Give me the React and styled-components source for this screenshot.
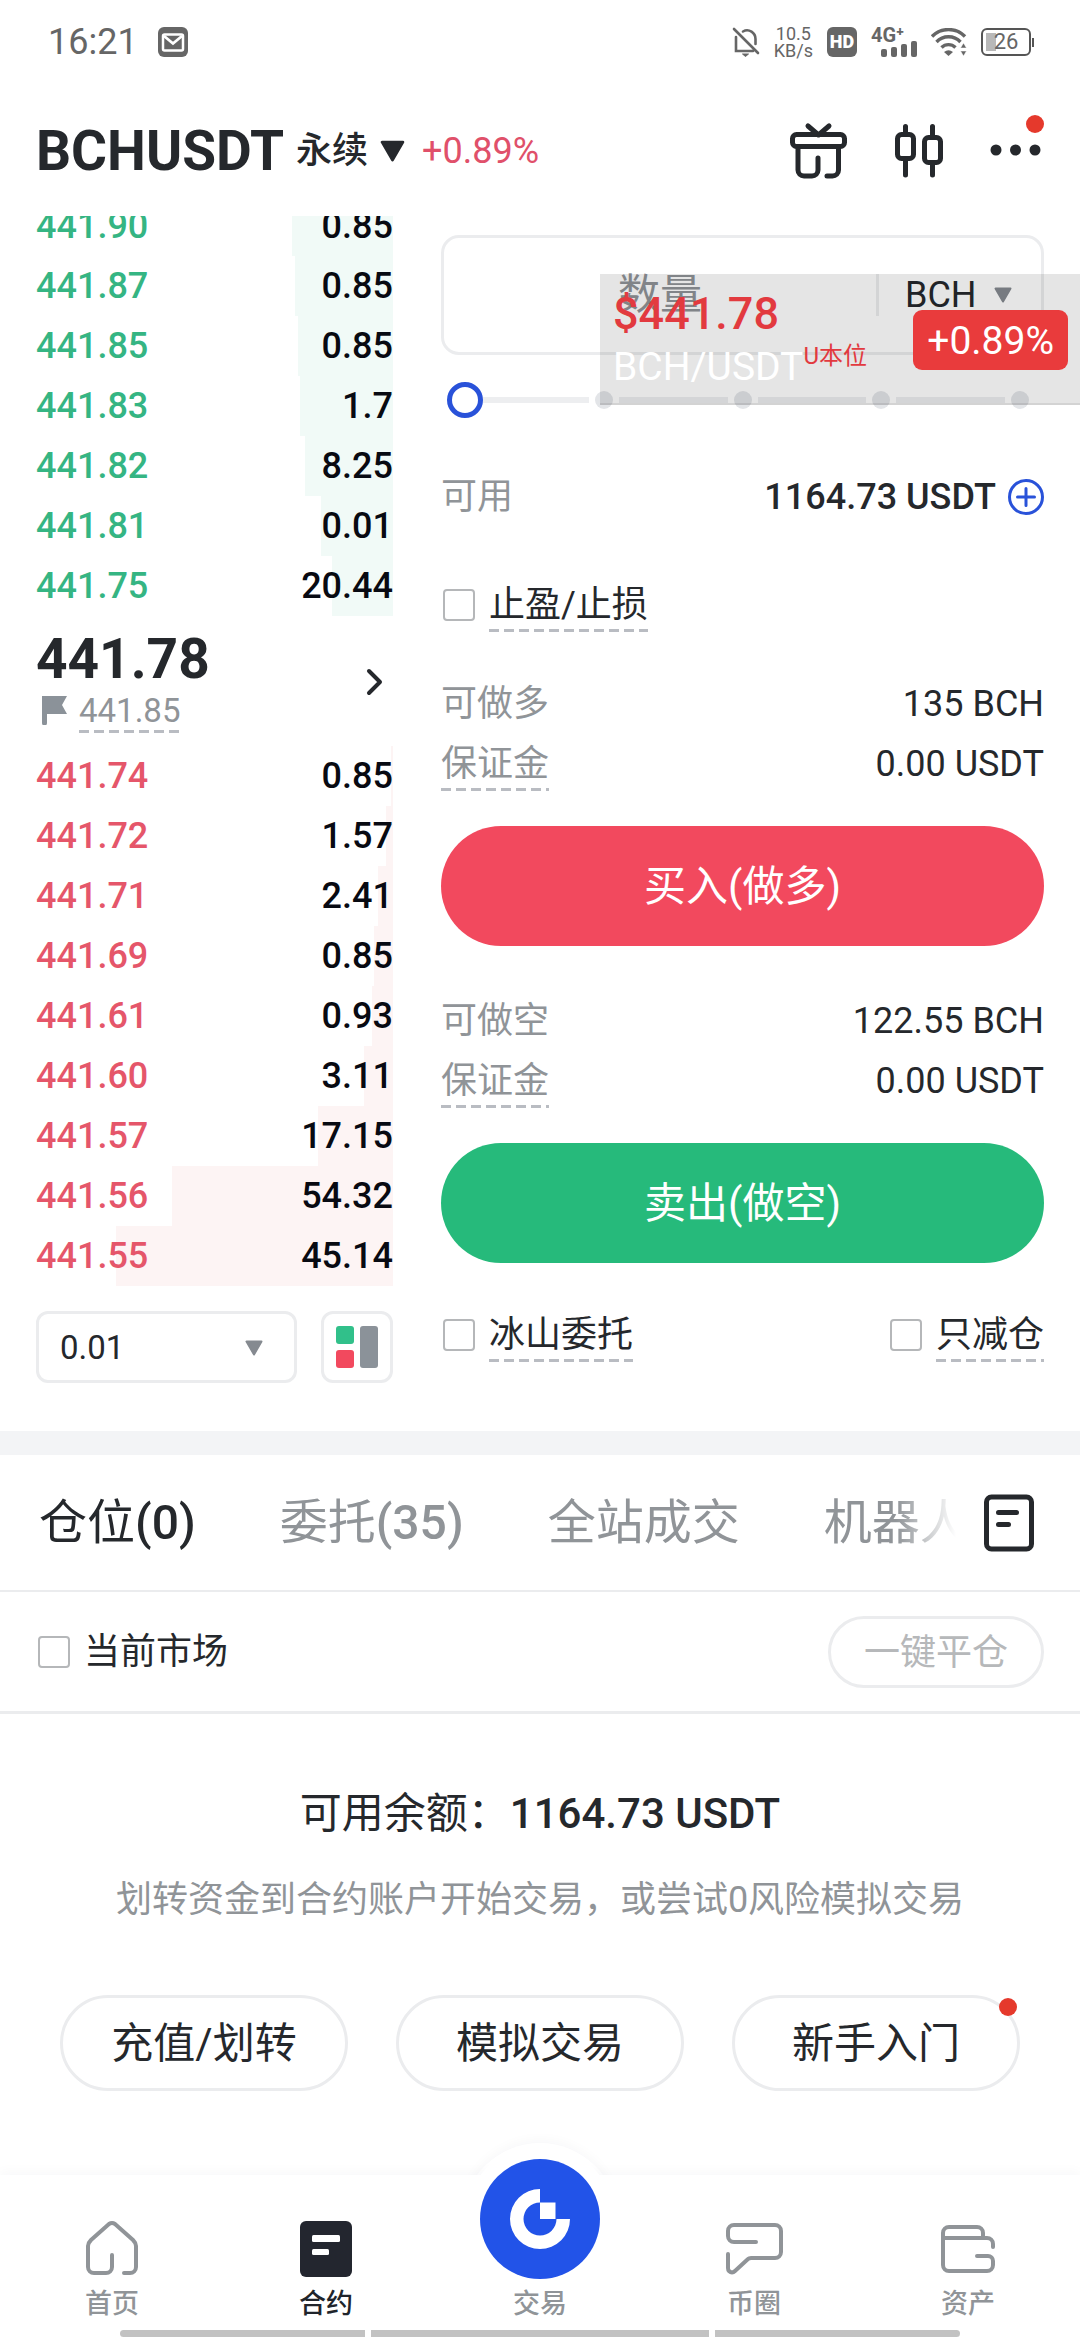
import React from "react";
import styled, { createGlobalStyle, css } from "styled-components";

const c = {
  ink: "#25282c",
  grey: "#909498",
  line: "#ebecee",
  red: "#f2495e",
  green: "#26ba7b",
  blue: "#2952d9",
  alert: "#e5392c",
};

const Global = createGlobalStyle`
  * { box-sizing: border-box; }
  body {
    margin: 0;
    background: #fff;
    color: ${c.ink};
    font: 400 36px/54px Roboto, "Noto Sans CJK SC", sans-serif;
  }
  button, input, select { font: inherit; color: inherit; }
  button { padding: 0; border: 0; background: none; }
  a { color: inherit; text-decoration: none; }
  svg { display: block; flex: none; }
`;

const Page = styled.div`
  display: flex;
  flex-direction: column;
  min-height: 100vh;
  position: relative;
  isolation: isolate;
  overflow: hidden;
  background: #fff;
`;

/* status bar */
const StatusBar = styled.div`
  display: flex;
  align-items: center;
  height: 84px;
  padding: 0 46px 0 48px;
  color: #666;
`;
const Clock = styled.span`
  margin-right: 20px;
`;
const StatusIcons = styled.div`
  display: flex;
  align-items: center;
  gap: 14px;
  margin-left: auto;
`;
const NetSpeed = styled.div`
  display: flex;
  flex-direction: column;
  align-items: center;
  font-size: 18px;
  line-height: 17px;
`;
const HdBadge = styled.span`
  width: 30px;
  border-radius: 6px;
  background: #666;
  color: #fff;
  font-size: 18px;
  font-weight: 900;
  line-height: 30px;
  text-align: center;
`;
const Signal = styled.div`
  display: flex;
  flex-direction: column;
  width: 46px;
  font-size: 20px;
  font-weight: 700;
  line-height: 17px;
  svg { align-self: flex-end; margin-top: -3px; }
`;
const Battery = styled.span`
  width: 50px;
  border: 2px solid #555;
  border-radius: 6px;
  background: linear-gradient(#b8b8b8, #b8b8b8) 3px center / 10px 18px no-repeat;
  font-size: 22px;
  line-height: 24px;
  text-align: center;
`;
const BatteryBox = styled.span`
  display: flex;
  align-items: center;
  gap: 1px;
  &::after { content: ""; width: 2px; height: 9px; background: #555; }
`;

/* header */
const Header = styled.header`
  display: flex;
  align-items: center;
  height: 132px;
  padding: 2px 36px 0;
`;
const PairButton = styled.button`
  display: flex;
  align-items: center;
  gap: 12px;
  font-weight: 500;
`;
const Pair = styled.span`
  font-size: 55px;
  font-weight: 700;
`;
const Change = styled.span`
  margin-left: 17px;
  color: #e0506a;
`;
const HeaderTools = styled.div`
  display: flex;
  align-items: center;
  gap: 44px;
  margin-left: auto;
`;
const IconButton = styled.button`
  position: relative;
  display: grid;
  place-items: center;
`;
const Dot = styled.i`
  position: absolute;
  top: ${(p) => p.$top}px;
  right: 0;
  width: 18px;
  height: 18px;
  border-radius: 50%;
  background: ${c.alert};
`;

/* trading area */
const Trade = styled.main`
  display: grid;
  grid-template-columns: 357fr 603fr;
  column-gap: 48px;
  padding: 0 36px 48px;
`;
const Column = styled.section`
  display: flex;
  flex-direction: column;
  min-width: 0;
`;
const BookClip = styled.div`
  display: flex;
  flex-direction: column;
  justify-content: flex-end;
  height: ${(p) => p.$height}px;
  overflow: hidden;
`;
const Book = styled.table`
  display: block;
  border-spacing: 0;
  font-weight: 500;
  tbody { display: block; }
`;
const BookRow = styled.tr`
  display: flex;
  justify-content: space-between;
  height: 60px;
  line-height: 60px;
  background: linear-gradient(${(p) => (p.$ask ? "#f1faf7, #f1faf7" : "#fdf4f4, #fdf4f4")}) right / 0 100% no-repeat;
`;
const Price = styled.td`
  padding: 0;
  color: ${(p) => (p.$ask ? "#35b583" : "#e5566a")};
`;
const Qty = styled.td`
  padding: 0;
  color: #080a12;
`;
const LastPrice = styled.button`
  display: flex;
  align-items: center;
  justify-content: space-between;
  height: 130px;
  padding: 2px 10px 0 0;
  text-align: left;
`;
const BigPrice = styled.div`
  font-size: 55px;
  font-weight: 700;
  line-height: 57px;
`;
const MarkPrice = styled.div`
  display: flex;
  align-items: center;
  gap: 12px;
  padding-left: 6px;
  color: ${c.grey};
  font-size: 33px;
  line-height: 45px;
`;
const dashed = css`
  background: repeating-linear-gradient(90deg, #b9bcc2 0 10px, transparent 10px 15px) left bottom / 100% 3px no-repeat;
`;
const Dashed = styled.span`
  ${dashed}
`;
const BookTools = styled.div`
  display: flex;
  gap: 24px;
  margin-top: 25px;
`;
const Depth = styled.label`
  display: flex;
  flex: 1;
  align-items: center;
  height: 72px;
  padding: 2px 31px 0 21px;
  border: 3px solid ${c.line};
  border-radius: 12px;
`;
const BareSelect = styled.select`
  flex: 1;
  min-width: 0;
  padding: 0;
  border: 0;
  outline: 0;
  appearance: none;
  background: none;
  font-size: ${(p) => p.$size}px;
`;
const LayoutButton = styled.button`
  display: grid;
  place-items: center;
  width: 72px;
  height: 72px;
  border: 3px solid ${c.line};
  border-radius: 12px;
`;

const AmountBox = styled.div`
  display: flex;
  align-items: center;
  height: 120px;
  margin-top: 19px;
  border: 3px solid ${c.line};
  border-radius: 18px;
`;
const AmountInput = styled.input`
  flex: 1;
  min-width: 0;
  padding: 0;
  border: 0;
  outline: 0;
  background: none;
  font-size: 42px;
  text-align: center;
  &::placeholder { color: ${c.grey}; opacity: 1; }
`;
const Unit = styled.label`
  display: flex;
  align-items: center;
  width: 165px;
  height: 42px;
  padding: 0 29px 0 26px;
  border-left: 3px solid ${c.line};
`;
const Slider = styled.div`
  display: grid;
  align-items: center;
  margin: 27px 6px 48px;
  > * { grid-area: 1 / 1; }
`;
const Track = styled.div`
  display: grid;
  grid-template-columns: repeat(4, 1fr);
  padding: 0 9px 0 27px;
`;
const Segment = styled.div`
  display: flex;
  align-items: center;
  gap: 6px;
  padding-left: 6px;
  &::before { content: ""; flex: 1; height: 6px; background: #edeef0; }
  &::after { content: ""; width: 18px; height: 18px; border-radius: 50%; background: #e3e5e8; }
`;
const Range = styled.input`
  width: 100%;
  height: 36px;
  margin: 0;
  appearance: none;
  background: none;
  &::-webkit-slider-thumb {
    appearance: none;
    width: 36px;
    height: 36px;
    border: 5px solid ${c.blue};
    border-radius: 50%;
    background: #fff;
  }
`;
const InfoRow = styled.div`
  display: flex;
  align-items: center;
  justify-content: space-between;
  height: 60px;
  padding-top: 1px;
`;
const Label = styled.span`
  color: ${c.grey};
  ${(p) => p.$help && dashed}
`;
const Value = styled.span`
  display: flex;
  align-items: center;
  gap: 12px;
  margin-left: auto;
  font-weight: ${(p) => (p.$strong ? 500 : 400)};
`;
const OptionRow = styled(InfoRow)`
  margin-top: ${(p) => p.$top}px;
`;
const Check = styled.label`
  display: flex;
  align-items: center;
  gap: 14px;
  padding-left: 2px;
`;
const CheckBox = styled.input`
  width: 32px;
  height: 32px;
  margin: 0;
  appearance: none;
  border: 2px solid #b5b7b9;
  border-radius: 4px;
  background: #fff;
`;
const OrderBlock = styled.div`
  margin-top: ${(p) => p.$top}px;
`;
const OrderButton = styled.button`
  width: 100%;
  height: 120px;
  margin-top: 33px;
  padding-top: 2px;
  border-radius: 60px;
  background: ${(p) => p.$color};
  color: #fff;
  font-size: 42px;
`;

/* floating price window */
const Floating = styled.aside`
  position: absolute;
  top: 274px;
  right: 0;
  display: flex;
  justify-content: space-between;
  width: 480px;
  height: 131px;
  padding: 14px 12px 0 13px;
  border-bottom: 2px solid rgba(0, 0, 0, 0.08);
  background: rgba(0, 0, 0, 0.1);
`;
const FloatPrice = styled.div`
  color: #e23a3f;
  font-size: 45px;
  font-weight: 500;
  line-height: 52px;
`;
const FloatPair = styled.div`
  display: flex;
  color: #fff;
  font-size: 39px;
`;
const FloatTag = styled.span`
  color: #e23a3f;
  font-size: 24px;
  line-height: 32px;
`;
const FloatBadge = styled.span`
  align-self: flex-start;
  margin-top: 22px;
  padding: 2px 14px 0;
  border-radius: 9px;
  background: #e93b3c;
  color: #fff;
  font-size: 39px;
  line-height: 58px;
`;

/* positions */
const Positions = styled.section`
  border-top: 24px solid #f3f4f6;
`;
const TabBar = styled.div`
  display: flex;
  align-items: center;
  height: 137px;
  padding: 0 46px 0 39px;
  border-bottom: 2px solid ${c.line};
`;
const Tabs = styled.div`
  display: flex;
  flex: 1;
  gap: 84px;
  min-width: 0;
  margin-right: 28px;
  overflow: hidden;
  white-space: nowrap;
  mask-image: linear-gradient(90deg, #000 calc(100% - 60px), transparent);
`;
const Tab = styled.button`
  flex: none;
  color: ${(p) => (p.$active ? c.ink : c.grey)};
  font-size: 48px;
  line-height: 72px;
  b { font-weight: 500; }
`;
const MarketRow = styled.div`
  display: flex;
  align-items: center;
  justify-content: space-between;
  height: 122px;
  padding: 0 36px;
  border-bottom: 3px solid ${c.line};
`;
const CloseAll = styled.button`
  height: 72px;
  padding: 2px 33px 0;
  border: 3px solid ${c.line};
  border-radius: 36px;
  color: #b6b8ba;
`;
const Empty = styled.section`
  padding: 68px 60px 84px;
  text-align: center;
`;
const Balance = styled.div`
  font-size: 42px;
  line-height: 63px;
  b { font-weight: 500; }
`;
const Hint = styled.p`
  margin: 28px 0 68px;
  color: ${c.grey};
`;
const Actions = styled.div`
  display: grid;
  grid-template-columns: repeat(3, 1fr);
  gap: 48px;
`;
const Action = styled.button`
  position: relative;
  height: 96px;
  padding-top: 2px;
  border: 3px solid ${c.line};
  border-radius: 48px;
  font-size: 42px;
`;

/* bottom navigation */
const Nav = styled.nav`
  position: relative;
  margin-top: auto;
  padding: 44px 5px 3px;
  background: #fff;
  box-shadow: 0 -3px 12px rgba(30, 40, 60, 0.03);
  &::before {
    content: "";
    position: absolute;
    z-index: -1;
    top: -32px;
    left: calc(50% - 78px);
    width: 156px;
    height: 156px;
    border-radius: 50%;
    background: #fff;
    box-shadow: 0 -3px 12px rgba(30, 40, 60, 0.03);
  }
`;
const NavItems = styled.div`
  display: grid;
  grid-template-columns: repeat(5, 1fr);
`;
const NavItem = styled.a`
  display: flex;
  flex-direction: column;
  align-items: center;
  gap: 6px;
  color: ${(p) => (p.$active ? "#20242b" : c.grey)};
  font-size: 27px;
  font-weight: 500;
  line-height: 38px;
`;
const Logo = styled.span`
  margin-top: -60px;
  border-radius: 50%;
  background: #2253e8;
  box-shadow: 0 0 0 14px #fff;
`;
const Gesture = styled.div`
  display: grid;
  grid-template-columns: 245fr 338fr 245fr;
  gap: 6px;
  margin: 7px 115px 0;
  border-radius: 4px;
  overflow: hidden;
  &::before, &::after { content: ""; }
  &::before, &::after, i { height: 7px; background: #c2c2c2; }
`;

const Down = ({ size = 18, color = "#858a90" }) => (
  <svg width={size} height={(size * 16) / 18} viewBox="0 0 18 16" fill={color} stroke={color} strokeWidth="2" strokeLinejoin="round">
    <path d="M1.5 1.5h15L9 14.500z" />
  </svg>
);

const Line = ({ w, h, s = 4, children }) => (
  <svg width={w} height={h} viewBox={`0 0 ${w} ${h}`} fill="none" stroke="currentColor" strokeWidth={s} strokeLinecap="round" strokeLinejoin="round">
    {children}
  </svg>
);

const asks = [
  ["441.90", "0.85", 101],
  ["441.87", "0.85", 98],
  ["441.85", "0.85", 95],
  ["441.83", "1.7", 93],
  ["441.82", "8.25", 88],
  ["441.81", "0.01", 72],
  ["441.75", "20.44", 61],
];
const bids = [
  ["441.74", "0.85", 2],
  ["441.72", "1.57", 7],
  ["441.71", "2.41", 15],
  ["441.69", "0.85", 19],
  ["441.61", "0.93", 21],
  ["441.60", "3.11", 29],
  ["441.57", "17.15", 75],
  ["441.56", "54.32", 221],
  ["441.55", "45.14", 277],
];
const DEPTH_MAX = 357;

const BookTable = ({ rows, ask }) => (
  <BookClip $height={ask ? 400 : 540}>
    <Book>
      <tbody>
        {rows.map(([price, qty, depth]) => (
          <BookRow key={price} $ask={ask} style={{ backgroundSize: `${(depth / DEPTH_MAX) * 100}% 100%` }}>
            <Price $ask={ask}>{price}</Price>
            <Qty>{qty}</Qty>
          </BookRow>
        ))}
      </tbody>
    </Book>
  </BookClip>
);

const Option = ({ children, plain }) => (
  <Check>
    <CheckBox type="checkbox" />
    {plain ? <span>{children}</span> : <Dashed>{children}</Dashed>}
  </Check>
);

const Order = ({ top, label, max, color, children }) => (
  <OrderBlock $top={top}>
    <InfoRow>
      <Label>{label}</Label>
      <Value>{max}</Value>
    </InfoRow>
    <InfoRow>
      <Label $help>保证金</Label>
      <Value>0.00 USDT</Value>
    </InfoRow>
    <OrderButton $color={color}>{children}</OrderButton>
  </OrderBlock>
);

export default function App() {
  return (
    <Page>
      <Global />
      <StatusBar>
        <Clock>16:21</Clock>
        <svg width="30" height="30" viewBox="0 0 30 30">
          <rect width="30" height="30" rx="6" fill="#666" />
          <rect x="5" y="7.500" width="20" height="16" rx="1.500" fill="none" stroke="#fff" strokeWidth="2.500" />
          <path d="M6 9l9 7.500L24 9" fill="none" stroke="#fff" strokeWidth="2.800" />
        </svg>
        <StatusIcons>
          <svg width="28" height="30" viewBox="0 0 28 30" fill="none" stroke="#666" strokeWidth="2.600">
            <path d="M2 2l24 24M4 10v14h17M11 4.500C17 1 23.500 6 23.500 12v5" strokeLinecap="round" />
            <path d="M10.500 27h6l-3 2.500z" fill="#666" strokeWidth="1" />
          </svg>
          <NetSpeed>
            <span>10.5</span>
            <span>KB/s</span>
          </NetSpeed>
          <HdBadge>HD</HdBadge>
          <Signal>
            <span>4G⁺</span>
            <svg width="36" height="16" viewBox="0 0 36 16" fill="#666">
              <rect x="0" y="8" width="6" height="8" rx="2" />
              <rect x="10" y="6" width="6" height="10" rx="2" />
              <rect x="20" y="3" width="6" height="13" rx="2" />
              <rect x="30" y="0" width="6" height="16" rx="2" />
            </svg>
          </Signal>
          <svg width="36" height="28" viewBox="0 0 36 28" fill="none" stroke="#666" strokeWidth="3.400">
            <path d="M1 8.500a23 23 0 0 1 33 0M5.500 14a16.500 16.500 0 0 1 24 0M10.500 19.500a10 10 0 0 1 14 0" />
            <path d="M13 24q4.500-3.500 9 0l-4.500 4z" fill="#666" stroke="none" />
            <path d="M32.500 15l3 5h-6zM32.500 28l3-5h-6z" fill="#666" stroke="#fff" strokeWidth="0.500" />
          </svg>
          <BatteryBox>
            <Battery>26</Battery>
          </BatteryBox>
        </StatusIcons>
      </StatusBar>

      <Header>
        <PairButton>
          <Pair>BCHUSDT</Pair>
          <span>永续</span>
          <Down size={25} color={c.ink} />
        </PairButton>
        <Change>+0.89%</Change>
        <HeaderTools>
          <IconButton aria-label="gift">
            <Line w={60} h={60} s={5}>
              <rect x="3.500" y="13.500" width="52" height="12" rx="4" />
              <path d="M19 5l10.500 9L40 5M9 26v23a6 6 0 0 0 6 6h8a6 6 0 0 0 6-6V37M49.500 26v23a6 6 0 0 1-6 6H38" />
            </Line>
          </IconButton>
          <IconButton aria-label="chart">
            <Line w={52} h={60} s={5}>
              <rect x="4.500" y="13.500" width="16" height="24" rx="4" />
              <rect x="31.500" y="16.500" width="16" height="25" rx="4" />
              <path d="M12.500 5.500v7M12.500 39v15M39.500 5.500v10M39.500 43v11" />
            </Line>
          </IconButton>
          <IconButton aria-label="more">
            <svg width="55" height="60" viewBox="0 0 55 60" fill={c.ink}>
              <circle cx="7" cy="29" r="5.500" />
              <circle cx="26.500" cy="29" r="5.500" />
              <circle cx="46" cy="29" r="5.500" />
            </svg>
            <Dot $top={-6} />
          </IconButton>
        </HeaderTools>
      </Header>

      <Trade>
        <Column>
          <BookTable rows={asks} ask />
          <LastPrice>
            <div>
              <BigPrice>441.78</BigPrice>
              <MarkPrice>
                <svg width="25" height="29" viewBox="0 0 25 29" fill="#8b9299">
                  <path d="M0 0h25l-5 9 5 9H5v9a2 2 0 0 1-5 0z" />
                </svg>
                <Dashed>441.85</Dashed>
              </MarkPrice>
            </div>
            <Line w={17} h={28} s={4}>
              <path d="M3 3l11 11L3 25" />
            </Line>
          </LastPrice>
          <BookTable rows={bids} />
          <BookTools>
            <Depth>
              <BareSelect aria-label="depth" $size={33} defaultValue="0.01">
                <option>0.01</option>
              </BareSelect>
              <Down />
            </Depth>
            <LayoutButton aria-label="layout">
              <svg width="42" height="42" viewBox="0 0 42 42">
                <rect width="18" height="18" rx="3" fill="#31c08a" />
                <rect y="24" width="18" height="18" rx="3" fill={c.red} />
                <rect x="24" width="18" height="42" rx="3" fill="#8b9299" />
              </svg>
            </LayoutButton>
          </BookTools>
        </Column>

        <Column>
          <AmountBox>
            <AmountInput aria-label="数量" placeholder="数量" />
            <Unit>
              <BareSelect aria-label="unit" $size={36} defaultValue="BCH">
                <option>BCH</option>
              </BareSelect>
              <Down />
            </Unit>
          </AmountBox>
          <Slider>
            <Track>
              <Segment />
              <Segment />
              <Segment />
              <Segment />
            </Track>
            <Range type="range" min="0" max="100" defaultValue="0" aria-label="percent" />
          </Slider>
          <InfoRow>
            <Label>可用</Label>
            <Value $strong>
              1164.73 USDT
              <svg width="36" height="36" viewBox="0 0 36 36" fill="none" stroke={c.blue} strokeWidth="3">
                <circle cx="18" cy="18" r="16.500" />
                <path d="M18 9.500v17M9.500 18h17" strokeLinecap="round" />
              </svg>
            </Value>
          </InfoRow>
          <OptionRow $top={48}>
            <Option>止盈/止损</Option>
          </OptionRow>
          <Order top={39} label="可做多" max="135 BCH" color={c.red}>
            买入(做多)
          </Order>
          <Order top={44} label="可做空" max="122.55 BCH" color={c.green}>
            卖出(做空)
          </Order>
          <OptionRow $top={41}>
            <Option>冰山委托</Option>
            <Option>只减仓</Option>
          </OptionRow>
        </Column>
      </Trade>

      <Positions>
        <TabBar>
          <Tabs>
            <Tab $active>
              仓位<b>(0)</b>
            </Tab>
            <Tab>
              委托<b>(35)</b>
            </Tab>
            <Tab>全站成交</Tab>
            <Tab>机器人</Tab>
          </Tabs>
          <IconButton aria-label="history">
            <Line w={50} h={58} s={5}>
              <rect x="2.500" y="3" width="45" height="52" rx="5" />
              <path d="M14.500 18.500h18M14.500 30.500h10" />
            </Line>
          </IconButton>
        </TabBar>
        <MarketRow>
          <Option plain>当前市场</Option>
          <CloseAll>一键平仓</CloseAll>
        </MarketRow>
      </Positions>

      <Empty>
        <Balance>
          可用余额：<b>1164.73 USDT</b>
        </Balance>
        <Hint>划转资金到合约账户开始交易，或尝试0风险模拟交易</Hint>
        <Actions>
          <Action>充值/划转</Action>
          <Action>模拟交易</Action>
          <Action>
            新手入门
            <Dot $top={0} />
          </Action>
        </Actions>
      </Empty>

      <Nav>
        <NavItems>
          <NavItem href="#home">
            <Line w={56} h={60}>
              <path d="M28 36v12a6 6 0 0 1-6 6H10a6 6 0 0 1-6-6V27c0-3 1-4 3-6L25 5q3-2 6 0l18 16c2 2 3 3 3 6v21a6 6 0 0 1-6 6h-6" />
            </Line>
            首页
          </NavItem>
          <NavItem href="#futures" $active>
            <svg width="52" height="60" viewBox="0 0 52 60">
              <rect y="2" width="52" height="56" rx="6" fill="#23262f" />
              <rect x="12" y="16" width="28" height="7" rx="1.500" fill="#fff" />
              <rect x="12" y="30" width="17" height="6" rx="1.500" fill="#fff" />
            </svg>
            合约
          </NavItem>
          <NavItem href="#trade">
            <Logo>
              <svg width="120" height="120" viewBox="0 0 120 120" fill="#fff">
                <path d="M60 30a30 30 0 1 0 30 30H76.500A16.500 16.500 0 1 1 60 43.500z" />
                <path d="M60 43.500h15.500V60H60z" />
              </svg>
            </Logo>
            交易
          </NavItem>
          <NavItem href="#community">
            <Line w={60} h={60}>
              <path d="M32 23H10a6 6 0 0 1-6-6v-5a6 6 0 0 1 6-6h41a6 6 0 0 1 6 6v21a6 6 0 0 1-6 6H27q-2 0-3 1L11 52q-3 3-6 0-1-1-1-3V35" />
            </Line>
            币圈
          </NavItem>
          <NavItem href="#assets">
            <Line w={58} h={60}>
              <path d="M44 18v-4a6 6 0 0 0-6-6H10a6 6 0 0 0-6 6v32a6 6 0 0 0 6 6h38a6 6 0 0 0 6-6v-4a5 5 0 0 0-5-5H38M4 19h44a6 6 0 0 1 6 6v3" />
            </Line>
            资产
          </NavItem>
        </NavItems>
        <Gesture>
          <i />
        </Gesture>
      </Nav>

      <Floating>
        <div>
          <FloatPrice>$441.78</FloatPrice>
          <FloatPair>
            BCH/USDT<FloatTag>U本位</FloatTag>
          </FloatPair>
        </div>
        <FloatBadge>+0.89%</FloatBadge>
      </Floating>
    </Page>
  );
}
